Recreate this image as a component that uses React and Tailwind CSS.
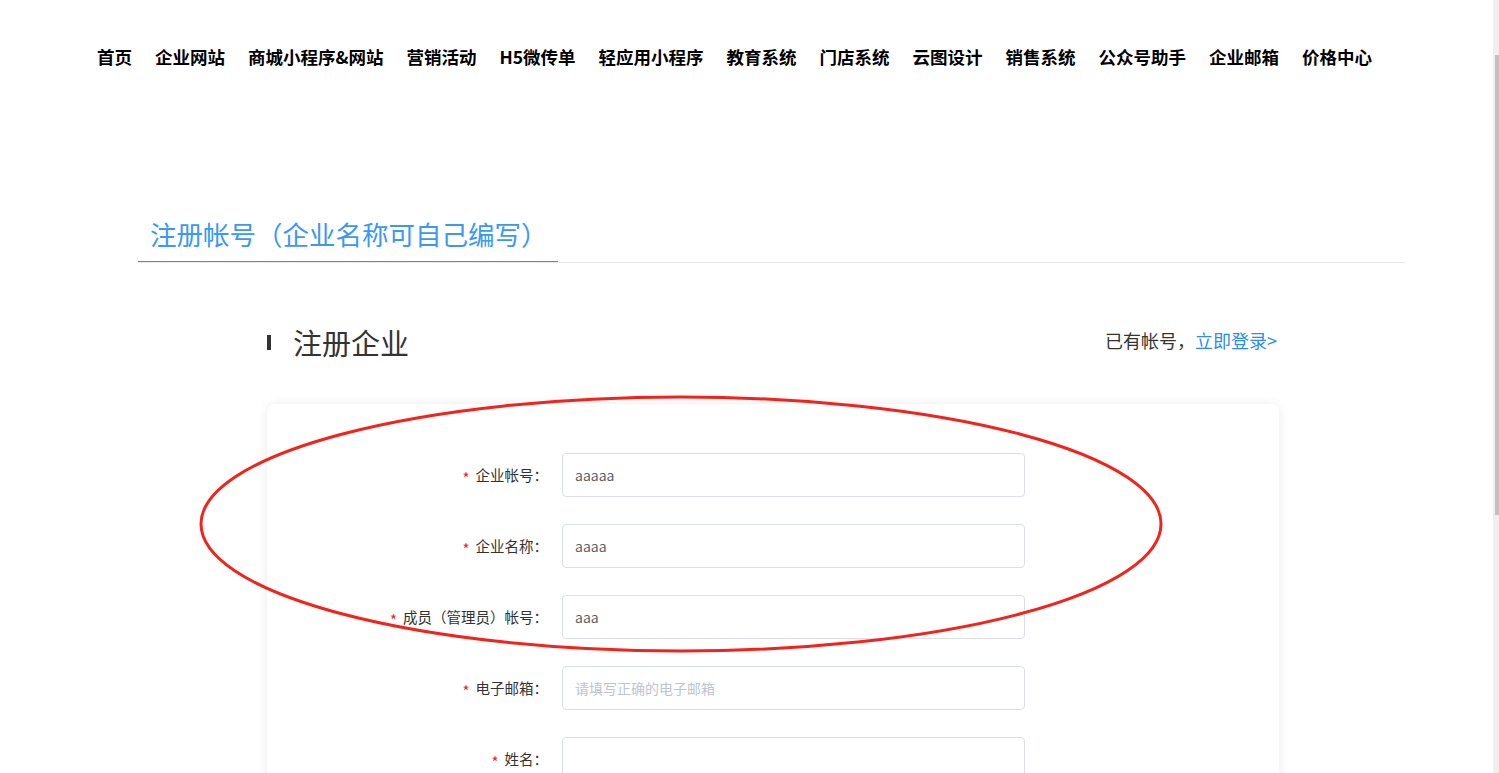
const navItems = [
  '首页',
  '企业网站',
  '商城小程序&网站',
  '营销活动',
  'H5微传单',
  '轻应用小程序',
  '教育系统',
  '门店系统',
  '云图设计',
  '销售系统',
  '公众号助手',
  '企业邮箱',
  '价格中心',
];

const fields = [
  { label: '企业帐号：', value: 'aaaaa' },
  { label: '企业名称：', value: 'aaaa' },
  { label: '成员（管理员）帐号：', value: 'aaa' },
  { label: '电子邮箱：', placeholder: '请填写正确的电子邮箱' },
  { label: '姓名：', value: '' },
];

const FormRow = ({ label, value, placeholder }) => (
  <div className="flex items-center h-[44px] mb-[27px]">
    <div className="w-[281px] flex justify-end items-center text-[14.5px] text-[#333]">
      <span className="text-[#f5222d] mr-[6px] text-[15px] leading-none pt-[4px]">*</span>
      <span>{label}</span>
    </div>
    <div className="ml-[14px] w-[463px] h-[44px] border border-[#dcdfe6] rounded-[4px] flex items-center px-[12px] text-[14px]">
      {value ? (
        <span className="text-[#606266]">{value}</span>
      ) : (
        <span className="text-[#c0c4cc]">{placeholder}</span>
      )}
    </div>
  </div>
);

export default function App() {
  return (
    <div
      className="relative w-full h-[773px] overflow-hidden flex bg-white"
      style={{ fontFamily: '"Noto Sans CJK SC", "Noto Sans", sans-serif' }}
    >
      <div className="flex-1 min-w-0">
        {/* top nav */}
        <nav className="h-[113px] flex items-center pl-[97px] gap-[23px]">
          {navItems.map((item) => (
            <a key={item} className="text-[17.5px] font-bold text-black leading-6 whitespace-nowrap">
              {item}
            </a>
          ))}
        </nav>

        {/* tabs */}
        <div className="mt-[103px] ml-[138px] w-[1267px] border-b border-[#e8e8e8] flex">
          <div className="w-[420px] pl-[12px] pb-[9px] border-b border-[#1cadb5]">
            <span className="text-[26.5px] leading-[36px] text-[#3b99f0] whitespace-nowrap">
              注册帐号（企业名称可自己编写）
            </span>
          </div>
        </div>

        {/* section header */}
        <div className="mt-[59px] ml-[267px] w-[1012px] flex items-center justify-between">
          <div className="flex items-center">
            <span className="w-[4px] h-[15px] bg-[#333]" />
            <h2 className="ml-[22px] text-[29px] leading-[40px] text-[#333]">注册企业</h2>
          </div>
          <div className="text-[18px] text-[#333] pr-[2px] pb-[3px]">
            已有帐号，<a className="text-[#2d8cf0]">立即登录&gt;</a>
          </div>
        </div>

        {/* form card */}
        <div className="mt-[42px] ml-[267px] w-[1012px] h-[600px] bg-white rounded-[8px] shadow-[0_0_12px_rgba(0,0,0,0.08)] pt-[49px]">
          {fields.map((f) => (
            <FormRow key={f.label} {...f} />
          ))}
        </div>
      </div>

      {/* scrollbar */}
      <div className="w-[6px] shrink-0 bg-[#efefef]">
        <div className="ml-[2px] w-[4px] mt-[55px] h-[460px] bg-[#c1c1c1]" />
      </div>

      {/* annotation */}
      <svg className="absolute inset-0 pointer-events-none" width="1499" height="773">
        <ellipse cx="681" cy="524" rx="480" ry="127" fill="none" stroke="#f5221b" strokeWidth="3" />
      </svg>
    </div>
  );
}
